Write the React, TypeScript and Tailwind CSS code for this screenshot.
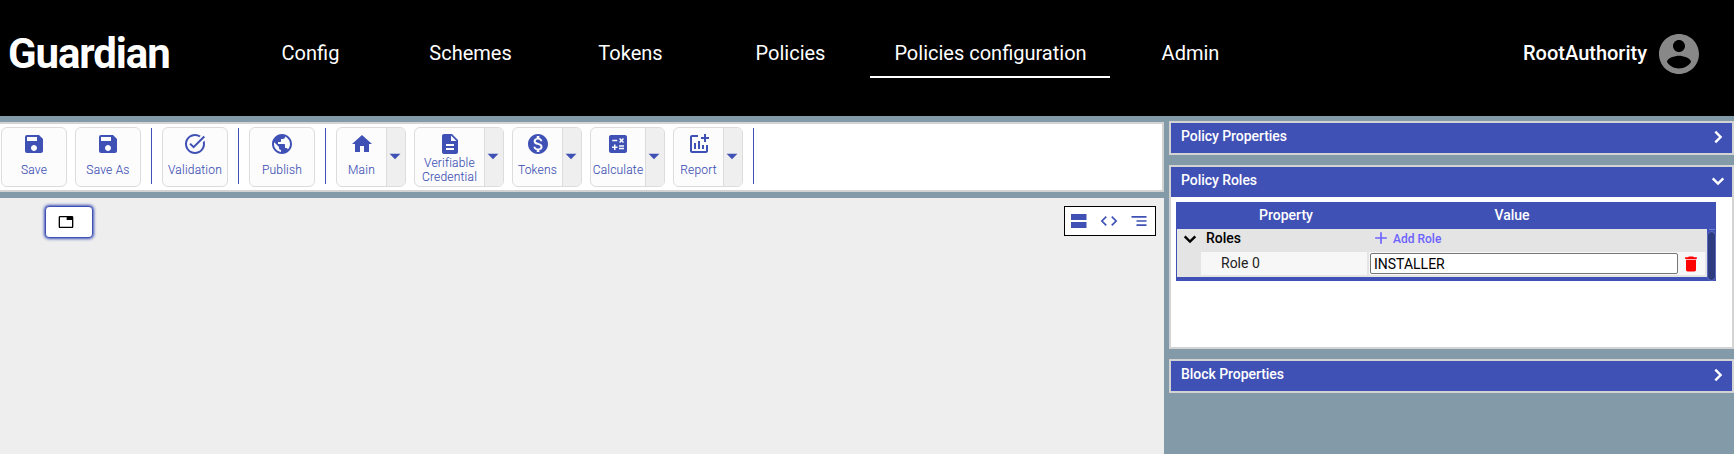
import type { ReactNode } from "react";
import {
  MdSave, MdTaskAlt, MdPublic, MdHome, MdDescription, MdMonetizationOn, MdCalculate, MdAddchart,
  MdArrowDropDown, MdTab, MdCode, MdSegment, MdDelete, MdAdd,
} from "react-icons/md";

const NAV = ["Config", "Schemes", "Tokens", "Policies", "Policies configuration", "Admin"];

function Tool({ icon, label, width = "w-[66px]", menu = false }: { icon: ReactNode; label: ReactNode; width?: string; menu?: boolean }) {
  return (
    <button className={`flex h-[60px] shrink-0 overflow-hidden rounded-md border border-[#dcdcdc] bg-[#fcfcfc] text-[#3f51b5] ${width}`}>
      <span className="flex h-full min-w-0 flex-1 flex-col items-center pt-1">
        <span className="h-6 text-[24px]">{icon}</span>
        <span className="-mt-px flex h-[30px] items-center justify-center text-center text-xs leading-[14px] font-light tracking-[0.2px] whitespace-nowrap [-webkit-text-stroke:0.1px_#3f51b5]">{label}</span>
      </span>
      {menu && (
        <span className="flex h-full w-[19px] shrink-0 items-center justify-center border-l border-[#dcdcdc] bg-[#efefef] pr-0.5">
          <MdArrowDropDown className="-mt-0.5 size-[26px] shrink-0" />
        </span>
      )}
    </button>
  );
}

function Separator() {
  return <div className="mx-0.5 mt-px h-14 w-px shrink-0 bg-[#3f51b5]" />;
}

function Chevron({ open, className }: { open?: boolean; className: string }) {
  return (
    <svg viewBox="0 0 24 24" className={className} fill="none" stroke="currentColor" strokeWidth="2.4">
      <path d={open ? "M6.7 9.3 12 14.6l5.3-5.3" : "M9.3 6.7 14.6 12l-5.3 5.3"} />
    </svg>
  );
}

function Panel({ title, open, children }: { title: string; open?: boolean; children?: ReactNode }) {
  return (
    <section className="border-2 border-[#d3d3d3] bg-white">
      <header className="flex h-[30px] items-center justify-between bg-[#3f51b5] pr-0.5 pl-2.5 text-sm font-medium text-white">
        <span className="-mt-1 tracking-[-0.05px]">{title}</span>
        <Chevron open={open} className="-mt-0.5 size-6" />
      </header>
      {children}
    </section>
  );
}

export default function App() {
  return (
    <div className="flex h-[454px] w-[1734px] flex-col overflow-hidden bg-[#839ba8] font-['Roboto',sans-serif]">
      <header className="flex h-[116px] shrink-0 items-center bg-black text-white">
        <div className="w-[230px] pb-[9px] pl-2 text-[42px] leading-[48px] font-bold tracking-[-1.1px]">Guardian</div>
        <nav className="flex h-full">
          {NAV.map((item) => (
            <a key={item} className={item === "Policies configuration" ? "flex w-60 flex-col items-center" : "flex w-40 flex-col items-center"}>
              <span className="mt-[30px] h-[46px] pl-px text-xl leading-[46px]">{item}</span>
              {item === "Policies configuration" && <span className="h-0.5 w-full bg-white" />}
            </a>
          ))}
        </nav>
        <div className="mb-2 ml-auto flex items-center pr-[31px]">
          <span className="mr-2 -mt-0.5 text-xl font-medium">RootAuthority</span>
          <svg viewBox="0 0 24 24" className="size-12 fill-[#888888]">
            <path d="M12 2C6.48 2 2 6.48 2 12s4.48 10 10 10 10-4.48 10-10S17.52 2 12 2zm0 3c1.66 0 3 1.34 3 3s-1.34 3-3 3-3-1.34-3-3 1.34-3 3-3zm0 14.2c-2.5 0-4.71-1.28-6-3.22.03-1.99 4-3.08 6-3.08 1.99 0 5.97 1.09 6 3.08-1.29 1.94-3.5 3.22-6 3.22z" />
          </svg>
        </div>
      </header>

      <div className="flex min-h-0 flex-1">
        <main className="flex w-[1164px] shrink-0 flex-col gap-1.5 pt-1.5">
          <div className="flex h-[70px] shrink-0 gap-2 border-y-2 border-r-2 border-[#d3d3d3] bg-white pt-[3px] pl-px">
            <Tool icon={<MdSave />} label="Save" />
            <Tool icon={<MdSave />} label="Save As" />
            <Separator />
            <Tool icon={<MdTaskAlt />} label="Validation" />
            <Separator />
            <Tool icon={<MdPublic />} label="Publish" />
            <Separator />
            <Tool icon={<MdHome />} label="Main" width="w-[70px]" menu />
            <Tool icon={<MdDescription />} label={<>Verifiable<br />Credential</>} width="w-[90px]" menu />
            <Tool icon={<MdMonetizationOn />} label="Tokens" width="w-[70px]" menu />
            <Tool icon={<MdCalculate />} label="Calculate" width="w-[75px]" menu />
            <Tool icon={<MdAddchart />} label="Report" width="w-[70px]" menu />
            <Separator />
          </div>

          <div className="flex flex-1 items-start justify-between bg-[#eeeeee] pt-2 pr-2 pl-[45px]">
            <div className="flex h-8 w-12 items-center rounded-[4px] border border-[#3f51b5] bg-white pl-3 text-black shadow-[0_0_3px_1px_#3f51b5]">
              <MdTab className="size-4" />
            </div>
            <div className="flex h-[30px] w-[92px] items-center border border-black bg-white pl-1 text-[#3f51b5]">
              <svg viewBox="0 0 20 20" className="mr-2.5 size-5 fill-current">
                <path d="M2 3h15.5v6H2zM2 11h15.5v6H2z" />
              </svg>
              <MdCode className="mr-2.5 size-5" />
              <MdSegment className="size-5" />
            </div>
          </div>
        </main>

        <aside className="ml-[5px] flex flex-1 flex-col gap-2.5 pt-[5px]">
          <Panel title="Policy Properties" />
          <Panel title="Policy Roles" open>
            <div className="h-[150px] pt-[5px] pl-[5px]">
              <div className="w-[540px] bg-[#3f51b5] pb-1 pl-px">
                <div className="flex h-[27px] items-center pb-0.5 text-sm font-medium text-white">
                  <span className="w-[218px] text-center">Property</span>
                  <span className="w-[234px] text-center">Value</span>
                </div>
                <div className="flex">
                  <div className="h-12 w-[530px] bg-[#e4e4e4]">
                    <div className="flex h-[23px] items-start text-sm font-medium text-black">
                      <Chevron open className="mr-1 ml-px size-6 -translate-y-0.5" />
                      <span className="w-[165px] leading-[19px]">Roles</span>
                      <MdAdd className="-mt-px mr-0.5 size-5 text-[#6c63ff]" />
                      <span className="text-xs leading-5 text-[#6c63ff]">Add Role</span>
                    </div>
                    <div className="ml-6 flex h-[23px] gap-0.5">
                      <div className="w-[166px] bg-[#f7f7f7] pl-5 text-sm leading-[23px] text-[#222]">Role 0</div>
                      <div className="flex w-[336px] items-center bg-[#f7f7f7] pl-px">
                        <input defaultValue="INSTALLER" className="h-[21px] w-[308px] rounded-xs border border-[#767676] bg-white px-[3px] text-sm leading-4 text-black" />
                        <MdDelete className="ml-[3px] size-5 text-[#ff0000]" />
                      </div>
                    </div>
                  </div>
                  <div className="-mb-[3px] flex flex-1 flex-col items-center">
                    <div className="h-px w-1.5 bg-[#7381cc]" />
                    <div className="mt-0.5 w-[7px] flex-1 rounded-sm bg-[#2f3b80] outline outline-[#5a69bd]" />
                  </div>
                </div>
              </div>
            </div>
          </Panel>
          <Panel title="Block Properties" />
        </aside>
      </div>
    </div>
  );
}
